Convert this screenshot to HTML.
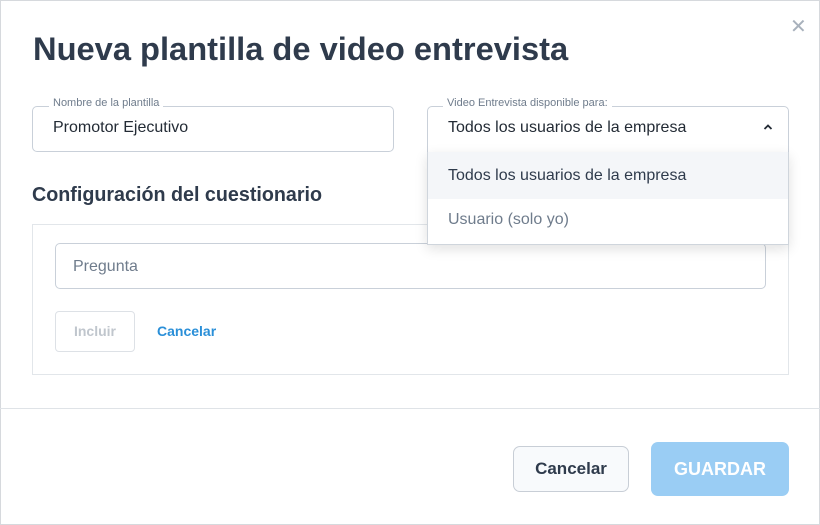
<!DOCTYPE html>
<html><head><style>
*{box-sizing:border-box;margin:0;padding:0}
body{width:820px;height:525px;background:#fff;font-family:"Liberation Sans",sans-serif;position:relative;overflow:hidden;color:#2f3b4c}
.abs{position:absolute}
.title{left:33px;top:31px;font-size:32px;font-weight:bold;color:#2f3b4c;white-space:nowrap;transform-origin:0 0;transform:scaleX(1.02)}
.field{border:1px solid #c9d0d9;border-radius:5px}
.legend{font-size:11px;color:#6f7c8c;background:#fff;padding:0 4px;white-space:nowrap}
.val{font-size:16px;color:#232b35;white-space:nowrap}
</style></head><body>
<div class="abs" style="left:0;top:0;width:820px;height:525px;border:1px solid #d6d9dd"></div>
<div class="abs title">Nueva plantilla de video entrevista</div>
<div class="abs" style="left:790px;top:14px;font-size:20px;color:#a8b1bc">✕</div>

<div class="abs field" style="left:32px;top:106px;width:362px;height:46px"></div>
<div class="abs legend" style="left:49px;top:97px">Nombre de la plantilla</div>
<div class="abs val" style="left:53px;top:119px">Promotor Ejecutivo</div>

<div class="abs field" style="left:427px;top:106px;width:362px;height:48px;border-bottom-left-radius:0;border-bottom-right-radius:0"></div>
<div class="abs legend" style="left:443px;top:97px">Video Entrevista disponible para:</div>
<div class="abs val" style="left:448px;top:119px">Todos los usuarios de la empresa</div>
<svg class="abs" style="left:763px;top:123px" width="10" height="8" viewBox="0 0 10 8"><path d="M1.5 6 L5 2.5 L8.5 6" stroke="#232b35" stroke-width="1.8" fill="none"/></svg>

<div class="abs" style="left:32px;top:224px;width:757px;height:151px;border:1px solid #e2e6ea"></div>
<div class="abs" style="left:32px;top:184px;font-size:20px;font-weight:bold;color:#2f3b4c;white-space:nowrap;transform-origin:0 0;transform:scaleX(0.985)">Configuración del cuestionario</div>
<div class="abs field" style="left:55px;top:243px;width:711px;height:46px"></div>
<div class="abs" style="left:73px;top:258px;font-size:16px;color:#6f7c8c">Pregunta</div>
<div class="abs" style="left:55px;top:311px;width:80px;height:41px;border:1px solid #dde1e6;border-radius:4px;font-size:14px;color:#c0c6cd;text-align:center;line-height:39px;font-weight:bold">Incluir</div>
<div class="abs" style="left:157px;top:323px;font-size:14px;font-weight:bold;color:#2a8fd8">Cancelar</div>

<div class="abs" style="left:427px;top:152px;width:362px;height:93px;background:#fff;border:1px solid #cfd5dc;border-top:none;box-shadow:0 4px 12px rgba(0,0,0,.12)">
<div style="height:47px;background:#f4f6f9;padding:15px 20px;font-size:16px;color:#2f3b4c;white-space:nowrap">Todos los usuarios de la empresa</div>
<div style="height:45px;padding:12px 20px;font-size:16px;color:#6f7c8c">Usuario (solo yo)</div>
</div>

<div class="abs" style="left:0;top:408px;width:820px;height:1px;background:#dfe3e7"></div>
<div class="abs" style="left:513px;top:446px;width:116px;height:46px;border:1px solid #c8ced6;border-radius:7px;background:#f8fafc;text-align:center;line-height:44px;font-size:17px;font-weight:bold;color:#2f3b4c">Cancelar</div>
<div class="abs" style="left:651px;top:442px;width:138px;height:54px;border-radius:7px;background:#9acdf4;text-align:center;line-height:54px;font-size:18px;font-weight:bold;color:#fff">GUARDAR</div>
</body></html>
